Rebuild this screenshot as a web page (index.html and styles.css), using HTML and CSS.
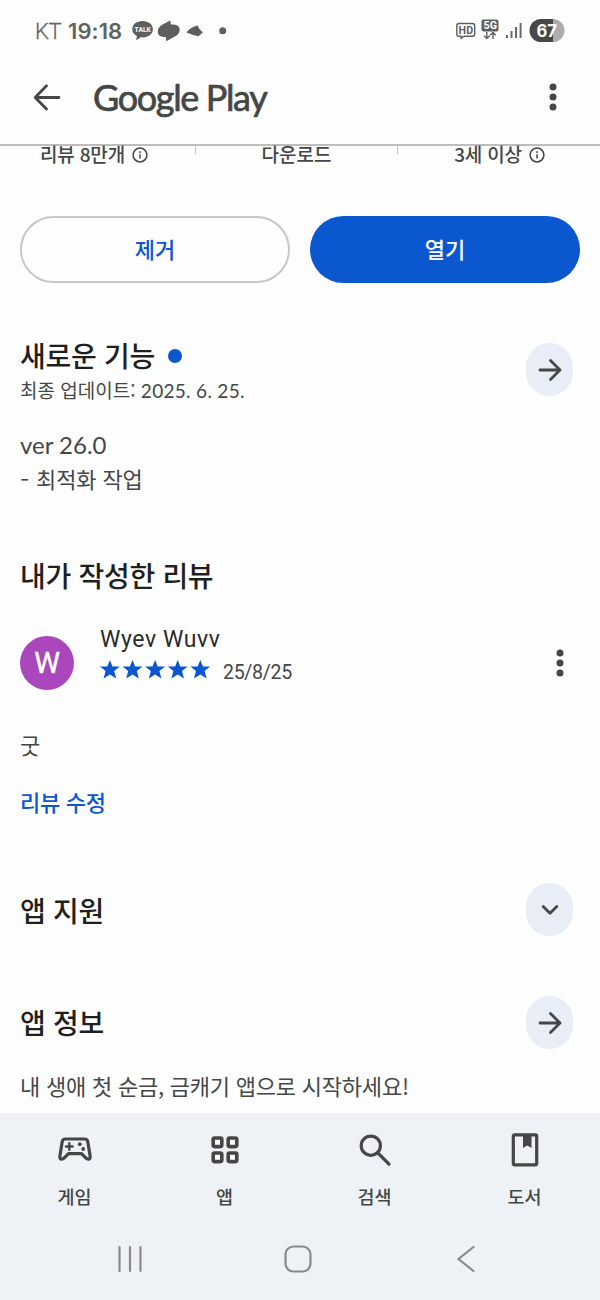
FILE: index.html
```html
<!DOCTYPE html>
<html lang="ko">
<head>
<meta charset="utf-8">
<title>Google Play</title>
<link rel="stylesheet" href="styles.css">
</head>
<body>
<div class="screen">
  <div class="status">
    <span class="carrier">KT</span><span class="clock">19:18</span>
    <svg class="notices" width="100" height="30" viewBox="130 16 100 30">
      <path d="M142.500 21c-6 0-10.200 3.600-10.200 8.200 0 3 1.800 5.400 4.600 6.900l-.8 4.200 4.900-3c7 .8 11.900-3.200 11.900-8.100 0-4.600-4.400-8.200-10.400-8.200z"/>
      <text class="talk" x="134.600" y="32" textLength="16.300" lengthAdjust="spacingAndGlyphs">TALK</text>
      <path d="M170.300 20.500L170.900 24.600C176 24.200 180 26 179.700 30 179.400 34.300 175.500 36.400 173 37.400L166.300 41.200 165.800 37C161 37.200 157.600 35.400 157.800 31.400 158 27 161.500 25 164 23.700z"/>
      <path d="M186.400 32.500C189 28.500 193 26.700 197.600 25.500L199.500 29 202.900 32.500 198.500 36.200Q193 35.400 186.400 32.500z"/>
      <circle cx="222.700" cy="30.800" r="3.500"/>
    </svg>
    <svg class="radios" width="116" height="30" viewBox="452 16 116 30">
      <path class="thin" d="M459 23.500h13.500q2.200 0 2.200 2.200v8.300q0 2.200-2.200 2.200H464l-2.800 2.200v-2.200H459q-2.200 0-2.200-2.200v-8.300q0-2.200 2.200-2.200z"/>
      <text class="hd" x="458.600" y="34" textLength="14.500" lengthAdjust="spacingAndGlyphs">HD</text>
      <rect x="481.500" y="19.500" width="17" height="12" rx="2"/>
      <text class="gen" x="483.500" y="29.300" textLength="13.500" lengthAdjust="spacingAndGlyphs">5G</text>
      <path class="thin" d="M486.800 32v6.300m-2.800-2.600l2.800 2.800 2.800-2.800M493 39v-6.300m-2.800 2.600l2.800-2.800 2.800 2.800"/>
      <path class="bars" d="M507 38v-3M511.500 38v-7M516 38v-11M520.600 38V23"/>
      <path class="full" d="M541 19h12v23h-12a11.500 11.500 0 0 1 0-23z"/>
      <path class="empty" d="M553 19a11.500 11.500 0 0 1 0 23z"/>
      <text class="level" x="536.500" y="37" textLength="20.500" lengthAdjust="spacingAndGlyphs">67</text>
    </svg>
  </div>
  <header class="bar">
    <svg class="line back" width="30" height="30" viewBox="0 0 30 30"><path d="M27 15.500H3.500M14.500 3.700L3.200 15.500 14.500 27"/></svg>
    <span class="brand">Google Play</span>
    <svg class="dots" width="10" height="30" viewBox="0 0 10 30"><circle cx="5" cy="5" r="3.500"/><circle cx="5" cy="15" r="3.500"/><circle cx="5" cy="25" r="3.500"/></svg>
  </header>
  <div class="stats">
    <div class="stat first">리뷰 8만개<svg class="info" width="16" height="16" viewBox="0 0 16 16"><circle cx="8" cy="8" r="6.900"/><path d="M8 7.200v4.300M8 4.200v1.700"/></svg></div>
    <div class="stat">다운로드</div>
    <div class="stat last">3세 이상<svg class="info" width="16" height="16" viewBox="0 0 16 16"><circle cx="8" cy="8" r="6.900"/><path d="M8 7.200v4.300M8 4.200v1.700"/></svg></div>
  </div>
  <div class="actions">
    <div class="btn outline">제거</div>
    <div class="btn solid">열기</div>
  </div>
  <section class="news">
    <div class="row">
      <div class="titles">
        <h2>새로운 기능<i class="new"></i></h2>
        <p class="updated">최종 업데이트: <span class="date">2025. 6. 25.</span></p>
      </div>
      <span class="pill"><svg class="line" width="24" height="24" viewBox="0 0 24 24"><path d="M2 12h20M12.500 2.500L22 12l-9.500 9.500"/></svg></span>
    </div>
    <p class="ver">ver 26.0</p>
    <p class="body note"><span class="dash">-</span>최적화 작업</p>
  </section>
  <section class="review">
    <h2>내가 작성한 리뷰</h2>
    <div class="person">
      <span class="avatar">W</span>
      <div class="who">
        <div class="name">Wyev Wuvv</div>
        <div class="rating">
          <svg class="stars" width="112" height="20" viewBox="0 0 112 20">
            <defs><path id="star" d="M10 0l2.600 6.500h7.300l-5.600 4.600 2 7.300L10 14.400l-6.300 4 2-7.300L.1 6.500h7.300z"/></defs>
            <use href="#star" x="-.1"/><use href="#star" x="22.500"/><use href="#star" x="45.100"/><use href="#star" x="67.700"/><use href="#star" x="90.300"/>
          </svg>
          <span class="when">25/8/25</span>
        </div>
      </div>
      <svg class="dots" width="10" height="30" viewBox="0 0 10 30"><circle cx="5" cy="5" r="3.500"/><circle cx="5" cy="15" r="3.500"/><circle cx="5" cy="25" r="3.500"/></svg>
    </div>
    <p class="body comment">굿</p>
    <p class="edit">리뷰 수정</p>
  </section>
  <section class="row support">
    <h2>앱 지원</h2>
    <span class="pill"><svg class="line" width="24" height="24" viewBox="0 0 24 24"><path d="M5.200 8.600L12 15.300l6.800-6.700"/></svg></span>
  </section>
  <section class="row about">
    <h2>앱 정보</h2>
    <span class="pill"><svg class="line" width="24" height="24" viewBox="0 0 24 24"><path d="M2 12h20M12.500 2.500L22 12l-9.500 9.500"/></svg></span>
  </section>
  <p class="body summary">내 생애 첫 순금, 금캐기 앱으로 시작하세요!</p>
  <footer>
    <nav class="tabs">
      <div class="tab">
        <svg class="glyph" width="36" height="36" viewBox="0 0 36 36"><path d="M8.500 7H27.500Q30.300 7 30.800 9.700L33.100 24Q33.500 27.200 31.300 27.200 29.900 27.200 28.500 25.700L24.500 21.600H11.500L7.500 25.700Q6.100 27.200 4.700 27.200 2.500 27.200 2.900 24L5.200 9.700Q5.700 7 8.500 7z"/><path class="mid" d="M12.300 11.200v6.600M9 14.500h6.600"/><circle class="dot" cx="22.800" cy="12.200" r="1.900"/><circle class="dot" cx="26.200" cy="17" r="1.900"/></svg>
        <span>게임</span>
      </div>
      <div class="tab">
        <svg class="glyph cells" width="36" height="36" viewBox="0 0 36 36"><rect x="6.200" y="6" width="8.600" height="8.600" rx="1.500"/><rect x="21.200" y="6" width="8.600" height="8.600" rx="1.500"/><rect x="6.200" y="21" width="8.600" height="8.600" rx="1.500"/><rect x="21.200" y="21" width="8.600" height="8.600" rx="1.500"/></svg>
        <span>앱</span>
      </div>
      <div class="tab">
        <svg class="glyph" width="36" height="36" viewBox="0 0 36 36"><circle cx="13.800" cy="13.700" r="9.600"/><path d="M20.800 20.800L32 32.200"/></svg>
        <span>검색</span>
      </div>
      <div class="tab">
        <svg class="glyph" width="36" height="36" viewBox="0 0 36 36"><rect x="6.300" y="2.800" width="23.400" height="30" rx="1.200"/><path class="dot" d="M16 3h8.500v13L20.200 13.500 16 16z"/></svg>
        <span>도서</span>
      </div>
    </nav>
    <div class="system">
      <svg width="26" height="28" viewBox="0 0 26 28"><path d="M2.500 2v24M13 2v24M23.500 2v24"/></svg>
      <svg class="home" width="28" height="28" viewBox="0 0 28 28"><rect x="1.500" y="1.500" width="25" height="25" rx="8"/></svg>
      <svg width="20" height="28" viewBox="0 0 20 28"><path d="M17.500 2L2.500 14l15 12"/></svg>
    </div>
  </footer>
</div>
</body>
</html>
```
FILE: styles.css
```css
* { box-sizing: border-box; }
body { margin: 0; background: #fefefe; color: #444746; font-family: "Noto Sans CJK KR", sans-serif; }
h2, p { margin: 0; font-weight: 400; white-space: nowrap; }
svg { flex: none; display: block; }
.screen { width: 600px; height: 1300px; overflow: hidden; display: flex; flex-direction: column; }
.screen > * { flex: none; }

.status { height: 60px; padding: 16px 32px 14px 35px; display: flex; align-items: center; fill: #5e5e5e; color: #626262; font-family: Roboto, sans-serif; font-size: 22px; }
.carrier { width: 33px; font-size: 22px; letter-spacing: -.4px; font-weight: 300; -webkit-text-stroke: .3px #626262; }
.clock { width: 62px; font-family: Inter, sans-serif; font-weight: 600; font-size: 22px; letter-spacing: .1px; }
.notices { margin-right: auto; }
.talk { font: 700 7px Roboto, sans-serif; fill: #fefefe; }
.hd { font: 700 10.500px Roboto, sans-serif; }
.gen { font: 700 10.500px Roboto, sans-serif; fill: #fefefe; }
.thin { fill: none; stroke: #5e5e5e; stroke-width: 1.400; }
.bars { fill: none; stroke: #6a6a6a; stroke-width: 2; }
.full { fill: #484848; }
.empty { fill: #adadad; }
.level { font: 700 17.500px Inter, sans-serif; fill: #fefefe; }

.bar { height: 86px; padding: 0 42px 10px 32px; border-bottom: 2px solid #bdbdbd; display: flex; align-items: center; }
.line { fill: none; stroke: #444746; stroke-width: 2.800; stroke-linecap: round; stroke-linejoin: round; }
.brand { margin: 0 auto 0 31px; font-family: Lato, sans-serif; font-weight: 400; font-size: 36px; letter-spacing: -1.350px; line-height: 44px; -webkit-text-stroke: .7px #444746; }
.dots { fill: #444746; }

.stats { height: 70px; display: grid; grid-template-columns: 196px 203px 201px; font-size: 19px; font-weight: 500; line-height: 16px; background: linear-gradient(#c4c4c4, #c4c4c4) 195px 0 / 1px 8px no-repeat, linear-gradient(#c4c4c4, #c4c4c4) 397px 0 / 1px 8px no-repeat; letter-spacing: -.2px; }
.stat { height: 16px; display: flex; justify-content: center; align-items: center; }
.first { padding-right: 8px; }
.stat:nth-child(2) { letter-spacing: 0; padding-right: 2px; }
.info { margin-left: 7px; margin-top: 1px; fill: none; stroke: #444746; stroke-width: 1.500; }

.actions { height: 67px; padding: 0 20px; display: grid; grid-template-columns: 1fr 1fr; gap: 20px; }
.btn { border-radius: 34px; display: flex; align-items: center; justify-content: center; font-size: 22px; font-weight: 500; padding-bottom: 3px; }
.outline { border: 2px solid #c7c7c7; color: #0b57d0; }
.solid { background: #0b57d0; color: #fff; }

h2 { font-size: 28px; font-weight: 500; line-height: 40px; letter-spacing: -.3px; color: #1f1f1f; display: flex; align-items: center; }
.body { font-size: 22px; line-height: 32px; }
.row { display: flex; justify-content: space-between; align-items: center; padding: 0 27px 0 20px; }
.pill { width: 47px; height: 53px; border-radius: 24px; background: #e8edf6; display: flex; align-items: center; justify-content: center; flex: none; }
.news { height: 273px; padding-top: 52px; }
.news .row { align-items: flex-start; }
.news .pill { margin-top: 8px; }
.new { width: 14px; height: 14px; border-radius: 50%; background: #0b57d0; margin: 2px 0 0 13px; }
.updated { font-size: 19px; line-height: 30px; }
.date { font-family: Lato, sans-serif; letter-spacing: .3px; }
.ver { margin: 22px 0 0 20px; font-family: Lato, sans-serif; font-size: 24px; line-height: 34px; letter-spacing: 0; }
.note { padding-left: 20px; letter-spacing: -.1px; }
.dash { display: inline-block; width: 16px; transform: scaleX(1.200); transform-origin: left; }
.review { height: 326px; padding-left: 20px; }
.person { height: 80px; margin-top: 28px; padding-right: 35px; display: flex; align-items: center; }
.avatar { width: 54px; height: 54px; border-radius: 50%; background: #ab47bc; color: #fff; font: 400 29px/54px Roboto, sans-serif; text-align: center; -webkit-text-stroke: .4px #fff; }
.who { margin: 0 auto 0 26px; height: 80px; font-family: Roboto, sans-serif; padding-top: 3px; }
.name { font-size: 23px; line-height: 28px; color: #2b2b2b; letter-spacing: .6px; }
.rating { display: flex; align-items: center; height: 34px; }
.stars { fill: #0b57d0; margin-top: -2px; }
.when { margin: 3px 0 0 11px; font-size: 19.500px; letter-spacing: -.3px; }
.comment { margin-top: 25px; }
.edit { margin-top: 25px; font-size: 22px; font-weight: 500; line-height: 32px; letter-spacing: -.3px; color: #0b57d0; }
.review h2, .about h2 { margin-top: -1px; margin-bottom: 1px; }
.support { height: 53px; margin-top: 1px; }
.about { height: 53px; margin-top: 60px; }
.summary { margin: 20px 0 0 20px; letter-spacing: -.22px; }

footer { height: 187px; margin-top: auto; background: #eef2f7; }
.tabs { display: grid; grid-template-columns: repeat(4, 150px); height: 112px; padding-top: 19px; }
.tab { display: flex; flex-direction: column; align-items: center; font-size: 18.500px; font-weight: 500; line-height: 28px; gap: 14px; }
.tab span { margin-left: -1px; }
.glyph { fill: none; stroke: #444746; stroke-width: 3.200; stroke-linecap: round; stroke-linejoin: round; }
.cells { stroke-width: 3.600; }
.cells rect { fill: #fefefe; }
.glyph .dot { fill: #444746; stroke: none; }
.glyph .mid { stroke-width: 2.400; }
.system { height: 75px; padding: 20px 124px 0 117px; display: flex; justify-content: space-between; fill: none; stroke: #88898d; stroke-width: 2.200; stroke-linecap: round; }
.home { margin-right: 4px; }
```
